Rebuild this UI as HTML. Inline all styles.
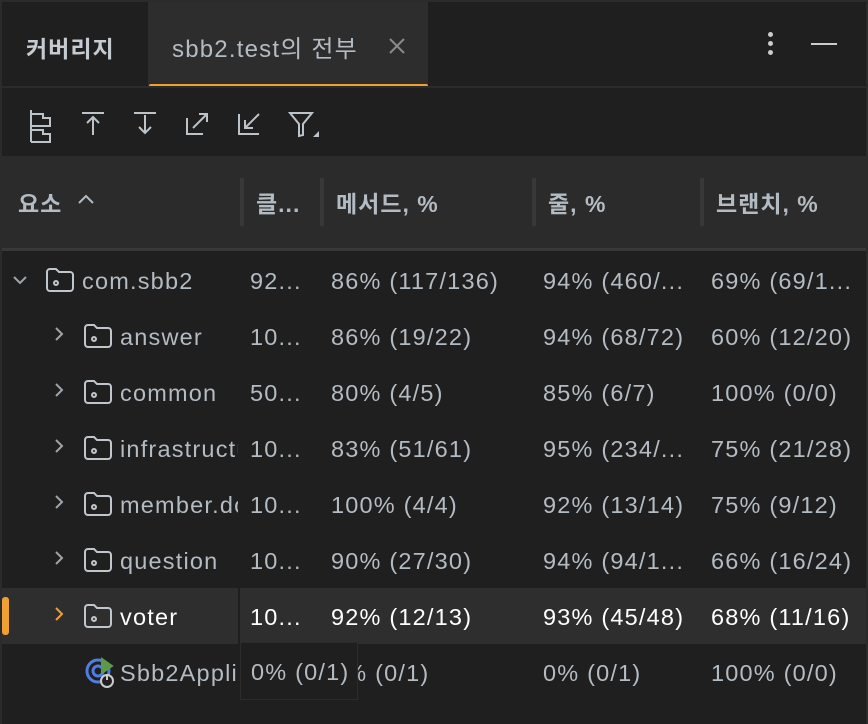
<!DOCTYPE html><html><head><meta charset="utf-8"><style>
body{margin:0;width:868px;height:724px;background:#1f1f1f;font-family:"Liberation Sans","Noto Sans CJK KR",sans-serif;color:#b3bbc3;overflow:hidden;position:relative}
.a{position:absolute;white-space:nowrap}
.t{font-size:23.5px;line-height:56px;letter-spacing:1.2px}
.h{font-weight:bold;font-size:23px;letter-spacing:1px}
.sep{position:absolute;top:178px;width:4px;height:48px;background:#383838}
svg{position:absolute}
</style></head><body>
<div class="a" style="left:0;top:0;width:868px;height:2px;background:#2b2b2b"></div>
<div class="a" style="left:866px;top:0;width:2px;height:724px;background:#2b2b2b"></div>
<div class="a" style="left:0;top:0;width:2px;height:724px;background:#2b2b2b"></div>
<div class="a" style="left:148px;top:2px;width:280px;height:84px;background:#2d2d2d"></div>
<div class="a" style="left:149px;top:84px;width:279px;height:4px;background:#f0a030;border-radius:2px"></div>
<div class="a" style="left:0;top:86px;width:866px;height:2px;background:#2b2b2b"></div>
<div class="a h" style="left:26px;top:30px;color:#c4ccd2;font-size:23px;letter-spacing:1px">커버리지</div>
<div class="a" style="left:172px;top:29px;font-size:24px;letter-spacing:1.2px;color:#b3bbc3">sbb2.test의 전부</div>
<svg width="20" height="20" style="left:388px;top:37px" stroke="#8a8a8a" stroke-width="2"><path d="M2 2l14 14M16 2L2 16"/></svg>
<div class="a" style="left:768px;top:32px;width:5px;height:5px;border-radius:3px;background:#ccc"></div>
<div class="a" style="left:768px;top:41px;width:5px;height:5px;border-radius:3px;background:#ccc"></div>
<div class="a" style="left:768px;top:50px;width:5px;height:5px;border-radius:3px;background:#ccc"></div>
<div class="a" style="left:811px;top:43px;width:26px;height:2px;background:#ccc"></div>
<svg width="300" height="40" style="left:20px;top:104px" fill="none" stroke="#bcc3c9" stroke-width="2">
<path d="M11 6v32M11 10h12v4h7v8H11M11 26h12v4h7v8H11"/>
<path d="M62 9h22M73 31V13M67 19l6-6 6 6"/>
<path d="M114 9h22M125 11v18M119 23l6 6 6-6"/>
<path d="M167 14v16h16M173 24l14-14M179 10h8v8"/>
<path d="M219 10v20h20M225 24l14-14M225 16v8h8"/>
<path d="M270 9h22l-9 11v11l-4 1V20z"/>
<path d="M293 33h6v-6z" fill="#bcc3c9" stroke="none"/>
</svg>
<div class="a" style="left:2px;top:156px;width:864px;height:92px;background:#2b2b2b"></div>
<div class="a" style="left:2px;top:248px;width:864px;height:3px;background:#383838"></div>
<div class="a h" style="left:18px;top:185px">요소</div>
<svg width="20" height="14" style="left:77px;top:193px" fill="none" stroke="#b3bbc3" stroke-width="2"><path d="M2 10l7-7 7 7"/></svg>
<div class="sep" style="left:240px"></div><div class="sep" style="left:320px"></div><div class="sep" style="left:532px"></div><div class="sep" style="left:700px"></div>
<div class="a h" style="left:256px;top:185px">클...</div>
<div class="a h" style="left:336px;top:185px">메서드, %</div>
<div class="a h" style="left:548px;top:185px">줄, %</div>
<div class="a h" style="left:716px;top:185px">브랜치, %</div>
<div class="a" style="left:2px;top:588px;width:864px;height:56px;background:#2e2e2e"></div>
<div class="a" style="left:238px;top:588px;width:2px;height:56px;background:#1f1f1f"></div>
<div class="a" style="left:2px;top:597px;width:7px;height:38px;border-radius:3px;background:#f0a030"></div>
<svg width="870" height="470" style="left:0;top:253px" fill="none" stroke="#9da4aa" stroke-width="2">
<path d="M14 24l6 6 6-6"/>
<path d="M56 75l6 6-6 6M56 131l6 6-6 6M56 187l6 6-6 6M56 243l6 6-6 6M56 299l6 6-6 6"/>
<path d="M56 355l6 6-6 6" stroke="#f0a030"/>
<g id="f" stroke="#c0c6cc"><path d="M47 19a3 3 0 0 1 3-3h6l3 3h11a3 3 0 0 1 3 3v13a3 3 0 0 1-3 3H50a3 3 0 0 1-3-3z"/><circle cx="56" cy="30" r="2"/></g>
<use href="#f" x="38" y="56"/><use href="#f" x="38" y="112"/><use href="#f" x="38" y="168"/><use href="#f" x="38" y="224"/><use href="#f" x="38" y="280"/><use href="#f" x="38" y="336"/>
<circle cx="98" cy="418" r="11" stroke="#4f7ee0" stroke-width="3"/>
<circle cx="98" cy="418" r="5" stroke="#4f7ee0" stroke-width="3"/>
<path d="M102 406l10 7-10 7z" fill="#5a9a48" stroke="#5a9a48"/>
<circle cx="107" cy="428" r="6" fill="#1f1f1f" stroke="#ccc"/>
<path d="M107 421v6" stroke="#ccc"/>
</svg>
<div class="a t" style="left:82px;top:253px">com.sbb2</div>
<div class="a t" style="left:120px;top:309px">answer</div>
<div class="a t" style="left:120px;top:365px">common</div>
<div class="a t" style="left:120px;top:421px;width:118px;overflow:hidden">infrastructure</div>
<div class="a t" style="left:120px;top:477px;width:118px;overflow:hidden">member.domain</div>
<div class="a t" style="left:120px;top:533px">question</div>
<div class="a t" style="left:120px;top:589px;color:#fff">voter</div>
<div class="a t" style="left:120px;top:645px;width:118px;overflow:hidden">Sbb2Application</div>
<div class="a t" style="left:250px;top:253px">92...<br>10...<br>50...<br>10...<br>10...<br>10...<br><span style="color:#fff">10...</span></div>
<div class="a t" style="left:331px;top:253px">86% (117/136)<br>86% (19/22)<br>80% (4/5)<br>83% (51/61)<br>100% (4/4)<br>90% (27/30)<br><span style="color:#fff">92% (12/13)</span><br>0% (0/1)</div>
<div class="a t" style="left:543px;top:253px">94% (460/...<br>94% (68/72)<br>85% (6/7)<br>95% (234/...<br>92% (13/14)<br>94% (94/1...<br><span style="color:#fff">93% (45/48)</span><br>0% (0/1)</div>
<div class="a t" style="left:711px;top:253px">69% (69/1...<br>60% (12/20)<br>100% (0/0)<br>75% (21/28)<br>75% (9/12)<br>66% (16/24)<br><span style="color:#fff">68% (11/16)</span><br>100% (0/0)</div>
<div class="a t" style="left:240px;top:642px;width:118px;height:58px;background:#1f1f1f;border:1px solid #2c2c2c;box-sizing:border-box;padding-left:10px;line-height:58px;overflow:hidden">0% (0/1)</div>
</body></html>
